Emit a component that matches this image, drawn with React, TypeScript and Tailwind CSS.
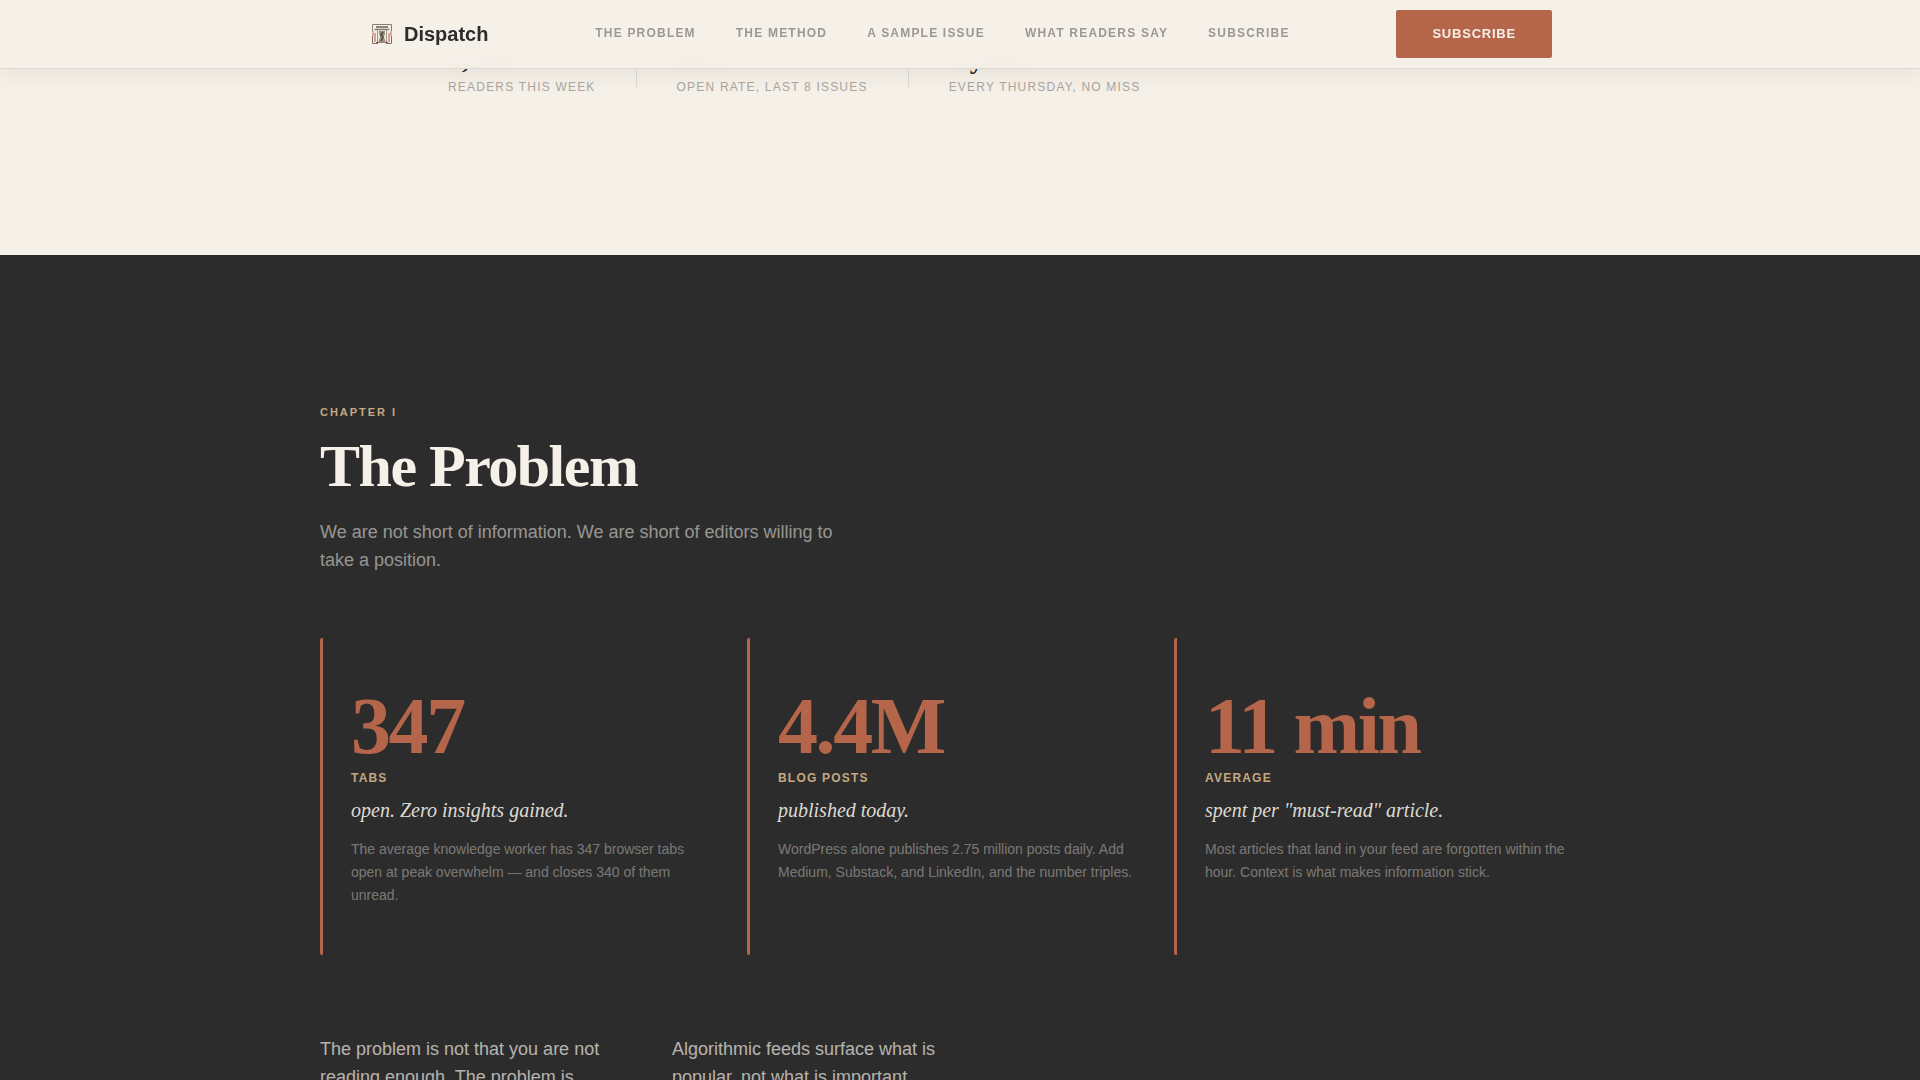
const links = [
  { label: "The Problem", href: "#problem" },
  { label: "The Method", href: "#method" },
  { label: "A Sample Issue", href: "#sample" },
  { label: "What Readers Say", href: "#readers" },
  { label: "Subscribe", href: "#subscribe" },
];

const proof = [
  { value: "4,200", label: "Readers this week" },
  { value: "68%", label: "Open rate, last 8 issues" },
  { value: "3 years", label: "Every Thursday, no miss" },
];

const problems = [
  {
    value: "347",
    unit: "Tabs",
    line: "open. Zero insights gained.",
    text: "The average knowledge worker has 347 browser tabs open at peak overwhelm — and closes 340 of them unread.",
  },
  {
    value: "4.4M",
    unit: "Blog posts",
    line: "published today.",
    text: "WordPress alone publishes 2.75 million posts daily. Add Medium, Substack, and LinkedIn, and the number triples.",
  },
  {
    value: "11 min",
    unit: "Average",
    line: 'spent per "must-read" article.',
    text: "Most articles that land in your feed are forgotten within the hour. Context is what makes information stick.",
  },
];

function Logo() {
  return (
    <svg width="28" height="28" viewBox="0 0 28 28" fill="none" aria-hidden="true">
      {/* corner brackets */}
      <path d="M4.500 11V4.500H23.500V11" stroke="#8a7d74" />
      <path d="M4.500 16v7.500H10M18 23.500h5.500V16" stroke="#8c6a60" />
      {/* side marks */}
      <path d="M5 11v5M23 11v5" stroke="#dcaea2" strokeWidth="2" />
      <path d="M7 13v9M21 13v9" stroke="#cfa496" strokeWidth="2" />
      {/* press */}
      <path d="M8 7h12" stroke="#6b6258" strokeWidth="1.500" />
      <path d="M6.500 9.500h15" stroke="#857b70" strokeWidth="1.500" />
      <path d="M9.500 10v12M18.500 10v12" stroke="#a2958a" />
      <path d="M11 11h6v3l-1 3 2 6h-8l2-6-1-3z" fill="#9a917c" />
      <path d="M15 12l-2 3 2 2-2 4" stroke="#514a3d" strokeWidth="1.500" />
      <path d="M8 22.500h3M17 22.500h3" stroke="#77685d" />
    </svg>
  );
}

export default function App() {
  return (
    <div className="min-h-screen bg-[#f5f0e8] font-['Liberation_Sans',Arial,sans-serif] text-[#2c2c2c]">
      <header className="fixed inset-x-0 top-0 z-10 border-b border-[#dedad2] bg-[#f5f0e8]/98 shadow-[0_4px_24px_rgba(44,44,44,0.08)] backdrop-blur-md">
        <div className="mx-auto flex h-17 max-w-[1280px] items-center justify-between px-12">
          <a href="#top" className="flex items-center gap-2 text-xl font-bold">
            <Logo />
            Dispatch
          </a>
          <nav className="flex gap-10 pb-0.5">
            {links.map((link) => (
              <a
                key={link.href}
                href={link.href}
                className="text-xs font-bold tracking-[0.1em] text-[#9c9891] uppercase"
              >
                {link.label}
              </a>
            ))}
          </nav>
          <button className="h-12 rounded-xs bg-[#b5654a] px-9 text-[13px] font-bold tracking-[0.06em] text-[#f5f0e8] uppercase">
            Subscribe
          </button>
        </div>
      </header>

      <section id="top" className="pt-[43px] pb-40">
        <div className="mx-auto flex max-w-[1024px]">
          {proof.map((item) => (
            <div key={item.label} className="group flex">
              <div>
                <p className="font-['Liberation_Serif',serif] text-[28px] leading-8 font-bold">{item.value}</p>
                <p className="mt-1 text-xs tracking-[0.1em] text-[#aaa69e] uppercase">{item.label}</p>
              </div>
              <span className="mx-10 h-11 w-px bg-[#dedad2] group-last:hidden" />
            </div>
          ))}
        </div>
      </section>

      <section id="problem" className="bg-[#2c2c2c] pt-36 pb-40 text-[#f5f0e8]">
        <div className="mx-auto max-w-[1280px]">
          <p className="text-[11px] leading-[26px] font-bold tracking-[0.18em] text-[#c4a882] uppercase">
            Chapter I
          </p>
          <h2 className="mt-2 font-['Liberation_Serif',serif] text-[60px] leading-[67px] font-bold tracking-tight">
            The Problem
          </h2>
          <p className="mt-[18px] max-w-[520px] text-lg leading-7 text-[#f5f0e8]/55">
            We are not short of information. We are short of editors willing to take a position.
          </p>

          <div className="mt-16 grid grid-cols-3 gap-px">
            {problems.map((item) => (
              <article key={item.value} className="rounded-xs border-l-3 border-[#b5654a] py-12 pr-8 pl-7">
                <p className="font-['Liberation_Serif',serif] text-[80px] leading-none font-bold tracking-[-0.03em] text-[#b5654a]">
                  {item.value}
                </p>
                <p className="mt-0.5 text-xs leading-5 font-bold tracking-[0.1em] text-[#c4a882] uppercase">
                  {item.unit}
                </p>
                <p className="mt-2 font-['Liberation_Serif',serif] text-xl leading-7 text-[#f5f0e8]/90 italic">
                  {item.line}
                </p>
                <p className="mt-3.5 text-sm leading-[23px] text-[#f5f0e8]/40">{item.text}</p>
              </article>
            ))}
          </div>

          <div className="mt-20 grid max-w-[640px] grid-cols-2 gap-16 text-lg leading-7 text-[#f5f0e8]/70">
            <p>The problem is not that you are not reading enough. The problem is</p>
            <p>Algorithmic feeds surface what is popular, not what is important.</p>
          </div>
        </div>
      </section>
    </div>
  );
}
